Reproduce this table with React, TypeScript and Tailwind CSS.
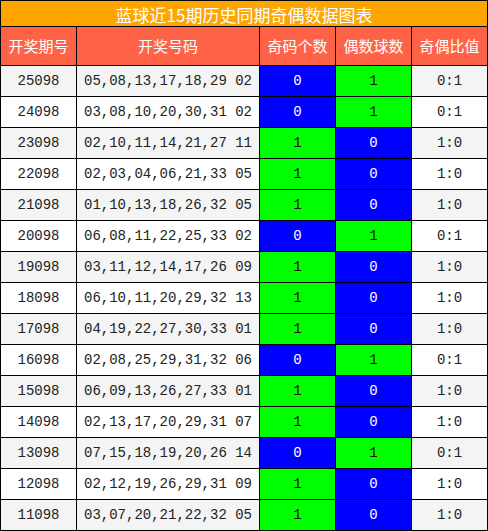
import React from "react";

const rows: [string, string, number, number, string][] = [
  ["25098", "05,08,13,17,18,29 02", 0, 1, "0:1"],
  ["24098", "03,08,10,20,30,31 02", 0, 1, "0:1"],
  ["23098", "02,10,11,14,21,27 11", 1, 0, "1:0"],
  ["22098", "02,03,04,06,21,33 05", 1, 0, "1:0"],
  ["21098", "01,10,13,18,26,32 05", 1, 0, "1:0"],
  ["20098", "06,08,11,22,25,33 02", 0, 1, "0:1"],
  ["19098", "03,11,12,14,17,26 09", 1, 0, "1:0"],
  ["18098", "06,10,11,20,29,32 13", 1, 0, "1:0"],
  ["17098", "04,19,22,27,30,33 01", 1, 0, "1:0"],
  ["16098", "02,08,25,29,31,32 06", 0, 1, "0:1"],
  ["15098", "06,09,13,26,27,33 01", 1, 0, "1:0"],
  ["14098", "02,13,17,20,29,31 07", 1, 0, "1:0"],
  ["13098", "07,15,18,19,20,26 14", 0, 1, "0:1"],
  ["12098", "02,12,19,26,29,31 09", 1, 0, "1:0"],
  ["11098", "03,07,20,21,22,32 05", 1, 0, "1:0"],
];

const cjk = "font-['Noto_Sans_CJK_SC','Noto_Sans',sans-serif]";
const mono = "font-['Liberation_Mono',monospace]";

function Cell({ v }: { v: number }) {
  return v === 1 ? (
    <div className={`bg-[#00ff00] text-[#111] flex items-center justify-center text-[14px] ${mono}`}>1</div>
  ) : (
    <div className={`bg-[#0000ff] text-white flex items-center justify-center text-[14px] ${mono}`}>0</div>
  );
}

export default function App() {
  return (
    <div className="w-[488px] h-[531px] bg-black p-px flex flex-col gap-px">
      <div className={`h-[25px] bg-[#ffa500] text-white text-[17px] leading-none flex items-center justify-center pt-[2px] ${cjk}`}>
        蓝球近15期历史同期奇偶数据图表
      </div>
      <div className="grid grid-cols-[75px_182px_75px_75px_75px] gap-px">
        {["开奖期号", "开奖号码", "奇码个数", "偶数球数", "奇偶比值"].map((h) => (
          <div
            key={h}
            className={`h-[38px] bg-[#ff6347] text-white text-[15px] flex items-center justify-center ${cjk}`}
          >
            {h}
          </div>
        ))}
        {rows.map(([p, n, odd, even, r], i) => {
          const zebra = i % 2 === 0 ? "bg-[#f4f4f4]" : "bg-white";
          return (
            <React.Fragment key={p}>
              <div className={`h-[30px] ${zebra} text-[#222] text-[14px] flex items-center justify-center ${mono}`}>{p}</div>
              <div className={`h-[30px] ${zebra} text-[#222] text-[14px] flex items-center justify-center whitespace-pre ${mono}`}>{n}</div>
              <Cell v={odd} />
              <Cell v={even} />
              <div className={`h-[30px] ${zebra} text-[#222] text-[14px] flex items-center justify-center ${mono}`}>{r}</div>
            </React.Fragment>
          );
        })}
      </div>
    </div>
  );
}
